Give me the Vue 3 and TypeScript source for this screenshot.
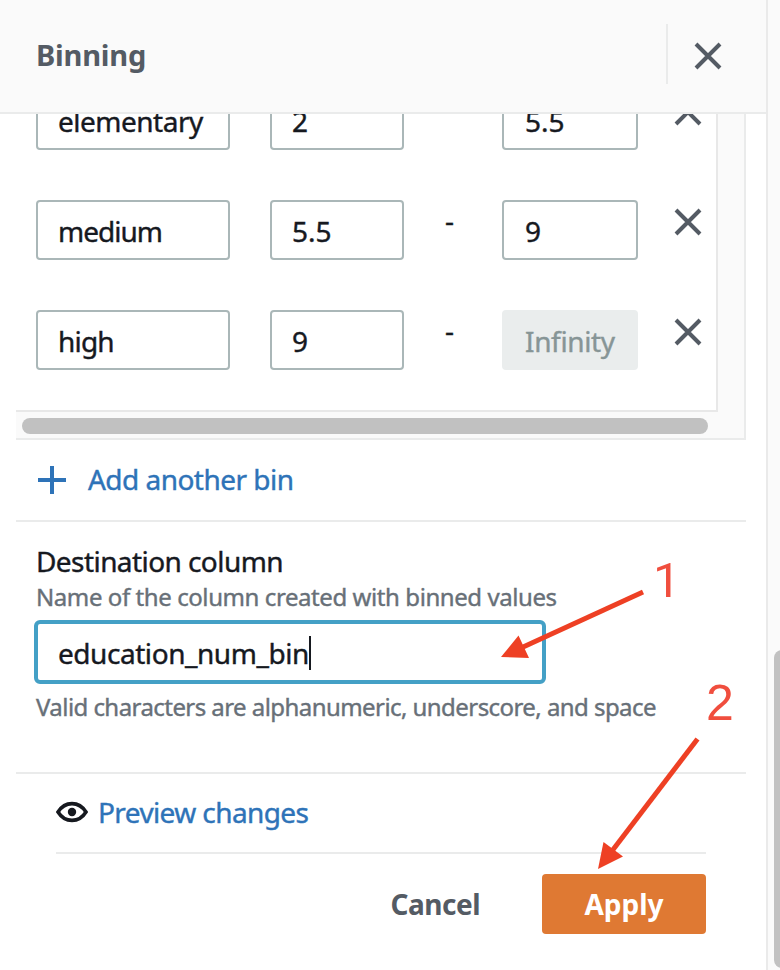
<script setup lang="ts">
interface Bin {
  name: string
  from: string
  to: string
  separator?: string
  disabled?: boolean
}

const bins: Bin[] = [
  { name: 'elementary', from: '2', to: '5.5' },
  { name: 'medium', from: '5.5', to: '9', separator: '-' },
  { name: 'high', from: '9', to: 'Infinity', separator: '-', disabled: true },
]
</script>

<template>
  <div class="page">
    <section class="panel">
      <header class="header">
        <h1 class="title">Binning</h1>
        <button class="close" aria-label="Close">
          <svg width="28" height="28" viewBox="0 0 28 28"><path d="M2 2 26 26M26 2 2 26" /></svg>
        </button>
      </header>

      <div class="bins">
        <div class="rows">
          <div v-for="bin in bins" :key="bin.name" class="row">
            <div class="field name"><span :class="'t-' + bin.name">{{ bin.name }}</span></div>
            <div class="field from"><span>{{ bin.from }}</span></div>
            <div class="dash">{{ bin.separator }}</div>
            <div class="field to" :class="{ disabled: bin.disabled }"><span>{{ bin.to }}</span></div>
            <button class="remove" aria-label="Remove">
              <svg width="28" height="28" viewBox="0 0 28 28"><path d="M2 2 26 26M26 2 2 26" /></svg>
            </button>
          </div>
        </div>
        <div class="hscroll"></div>
      </div>

      <div class="add">
        <svg width="28" height="28" viewBox="0 0 28 28"><path d="M14 0V28M0 14H28" /></svg>
        <span class="t-add">Add another bin</span>
      </div>

      <div class="destination">
        <div class="label"><span class="t-label">Destination column</span></div>
        <div class="hint"><span class="t-hint">Name of the column created with binned values</span></div>
        <div class="input"><span class="t-input">education_num_bin</span><i class="caret"></i></div>
        <div class="hint constraint"><span class="t-constraint">Valid characters are alphanumeric, underscore, and space</span></div>
      </div>

      <footer class="footer">
        <div class="preview">
          <svg width="32" height="22" viewBox="0 0 32 22">
            <path d="M2 11C9 -0.200 23 -0.200 30 11C23 22.200 9 22.200 2 11Z" />
            <circle cx="16" cy="11" r="4.2" />
          </svg>
          <span class="t-preview">Preview changes</span>
        </div>
        <div class="actions">
          <button class="cancel">Cancel</button>
          <button class="apply">Apply</button>
        </div>
      </footer>
    </section>

    <aside class="gutter"><div class="vscroll"></div></aside>

    <svg class="annotations" width="780" height="970" viewBox="0 0 780 970">
      <path class="shaft" d="M643 592 522 647.500" />
      <path class="head" d="M501 657 518.500 635.500 529 658Z" />
      <path class="shaft" d="M697.500 739 612 851" />
      <path class="head" d="M598 869 603.500 842 623 856.500Z" />
      <text class="one" x="653" y="597">1</text>
      <text x="706" y="720">2</text>
    </svg>
  </div>
</template>

<style>
body {
  margin: 0;
  overflow: hidden;
}
</style>

<style scoped>
.page {
  position: relative;
  display: flex;
  width: 780px;
  height: 970px;
  overflow: hidden;
  background: #fff;
  color: #16191f;
  font-family: "Noto Sans", "Open Sans", sans-serif;
  font-size: 28px;
  line-height: 40px;
}
.page * {
  box-sizing: border-box;
}
svg {
  display: block;
  fill: none;
}
span,
.dash {
  white-space: nowrap;
  -webkit-text-stroke: 0.4px currentColor;
}
button {
  padding: 0;
  border: 0;
  background: none;
  font: inherit;
  color: inherit;
}
.t-elementary {
  letter-spacing: -0.5px;
}
.t-medium {
  letter-spacing: -1px;
}
.t-high {
  letter-spacing: -0.8px;
}
.t-add {
  letter-spacing: -0.53px;
}
.t-label {
  letter-spacing: -0.57px;
}
.t-hint {
  letter-spacing: -0.42px;
}
.t-input {
  letter-spacing: -0.45px;
}
.t-constraint {
  letter-spacing: -0.56px;
}
.t-preview {
  letter-spacing: -0.6px;
}
.panel {
  display: flex;
  flex-direction: column;
  width: 768px;
  border-right: 2px solid #eaeaea;
}
.header {
  display: flex;
  align-items: center;
  justify-content: space-between;
  height: 114px;
  padding: 0 44px 4px 36px;
  border-bottom: 2px solid #eaebeb;
  background: #fafafa;
  flex: none;
}
.title {
  margin: 0;
  padding-top: 2px;
  font-size: 29px;
  font-weight: 700;
  letter-spacing: -0.2px;
  color: #545b64;
}
.close {
  display: flex;
  align-items: center;
  justify-content: flex-end;
  width: 56px;
  height: 60px;
  border-left: 2px solid #eaebeb;
}
.close svg {
  margin-top: 4px;
}
.close path,
.remove path {
  stroke: #545b64;
  stroke-width: 4;
}
.bins {
  flex: none;
  width: 730px;
  height: 326px;
  margin-left: 16px;
  border-right: 2px solid #eaebeb;
  border-bottom: 2px solid #eaebeb;
  background: #fafafa;
}
.rows {
  display: flex;
  flex-direction: column;
  justify-content: flex-end;
  gap: 50px;
  width: 702px;
  height: 298px;
  padding: 0 0 40px 20px;
  overflow: hidden;
  border-right: 2px solid #e8e8e8;
  border-bottom: 2px solid #e8e8e8;
  background: #fff;
}
.row {
  display: flex;
  flex: none;
  height: 60px;
}
.field {
  display: flex;
  align-items: center;
  height: 60px;
  padding: 2px 0 0 20px;
  border: 2px solid #aab7b8;
  border-radius: 4px;
  background: #fff;
}
.name {
  width: 194px;
}
.from {
  width: 134px;
  margin-left: 40px;
}
.dash {
  width: 98px;
  padding-left: 41px;
}
.to {
  width: 136px;
  padding-left: 21px;
}
.disabled {
  border-color: #eaeded;
  background: #eaeded;
  color: #879596;
  letter-spacing: -0.35px;
}
.remove {
  height: 28px;
  margin: 8px 0 0 36px;
}
.hscroll {
  width: 686px;
  height: 16px;
  margin: 6px 0 0 6px;
  border-radius: 8px;
  background: #c1c1c1;
}
.add {
  display: flex;
  flex: none;
  align-items: center;
  gap: 22px;
  width: 730px;
  height: 82px;
  margin-left: 16px;
  padding-left: 22px;
  border-bottom: 2px solid #eaebeb;
  color: #2e73b8;
}
.add span {
  margin-top: -2px;
}
.add path {
  stroke: #2e73b8;
  stroke-width: 4;
}
.destination {
  flex: none;
  width: 730px;
  height: 252px;
  margin-left: 16px;
  padding: 19px 0 0 18px;
  border-bottom: 2px solid #eaebeb;
}
.label,
.hint {
  padding-left: 2px;
}
.hint {
  height: 39px;
  font-size: 24px;
  line-height: 32px;
  color: #687078;
}
.input {
  display: flex;
  align-items: center;
  width: 512px;
  height: 64px;
  padding: 2px 0 0 20px;
  border: 4px solid #44a0c6;
  border-radius: 6px;
}
.caret {
  width: 2px;
  height: 34px;
  margin-top: -1px;
  background: #16191f;
}
.constraint {
  margin-top: 7px;
}
.footer {
  width: 650px;
  margin-left: 56px;
}
.preview {
  display: flex;
  align-items: center;
  gap: 10px;
  height: 80px;
  padding-bottom: 2px;
  border-bottom: 2px solid #eaebeb;
  color: #2e73b8;
}
.preview span {
  margin-top: -1px;
}
.preview path {
  stroke: #16191f;
  stroke-width: 3.600;
}
.preview circle {
  fill: #16191f;
}
.actions {
  display: flex;
  align-items: center;
  justify-content: flex-end;
  gap: 62px;
  margin-top: 20px;
  font-weight: 700;
}
.cancel {
  letter-spacing: -0.5px;
  color: #545b64;
}
.apply {
  width: 164px;
  height: 60px;
  border-radius: 4px;
  background: #df7933;
  color: #fff;
}
.gutter {
  width: 12px;
  padding: 650px 0 0 6px;
  overflow: hidden;
  background: #fafafa;
}
.vscroll {
  width: 16px;
  height: 318px;
  border-radius: 8px;
  background: #c1c1c1;
}
.annotations {
  position: absolute;
  inset: 0;
}
.shaft {
  stroke: #ee4024;
  stroke-width: 5;
}
.head {
  fill: #ee4024;
}
.annotations text {
  fill: #f04e3e;
  font-family: "Liberation Sans", Arial, sans-serif;
  font-size: 50px;
}
.annotations .one {
  font-family: Roboto, sans-serif;
  font-size: 49px;
}
</style>
